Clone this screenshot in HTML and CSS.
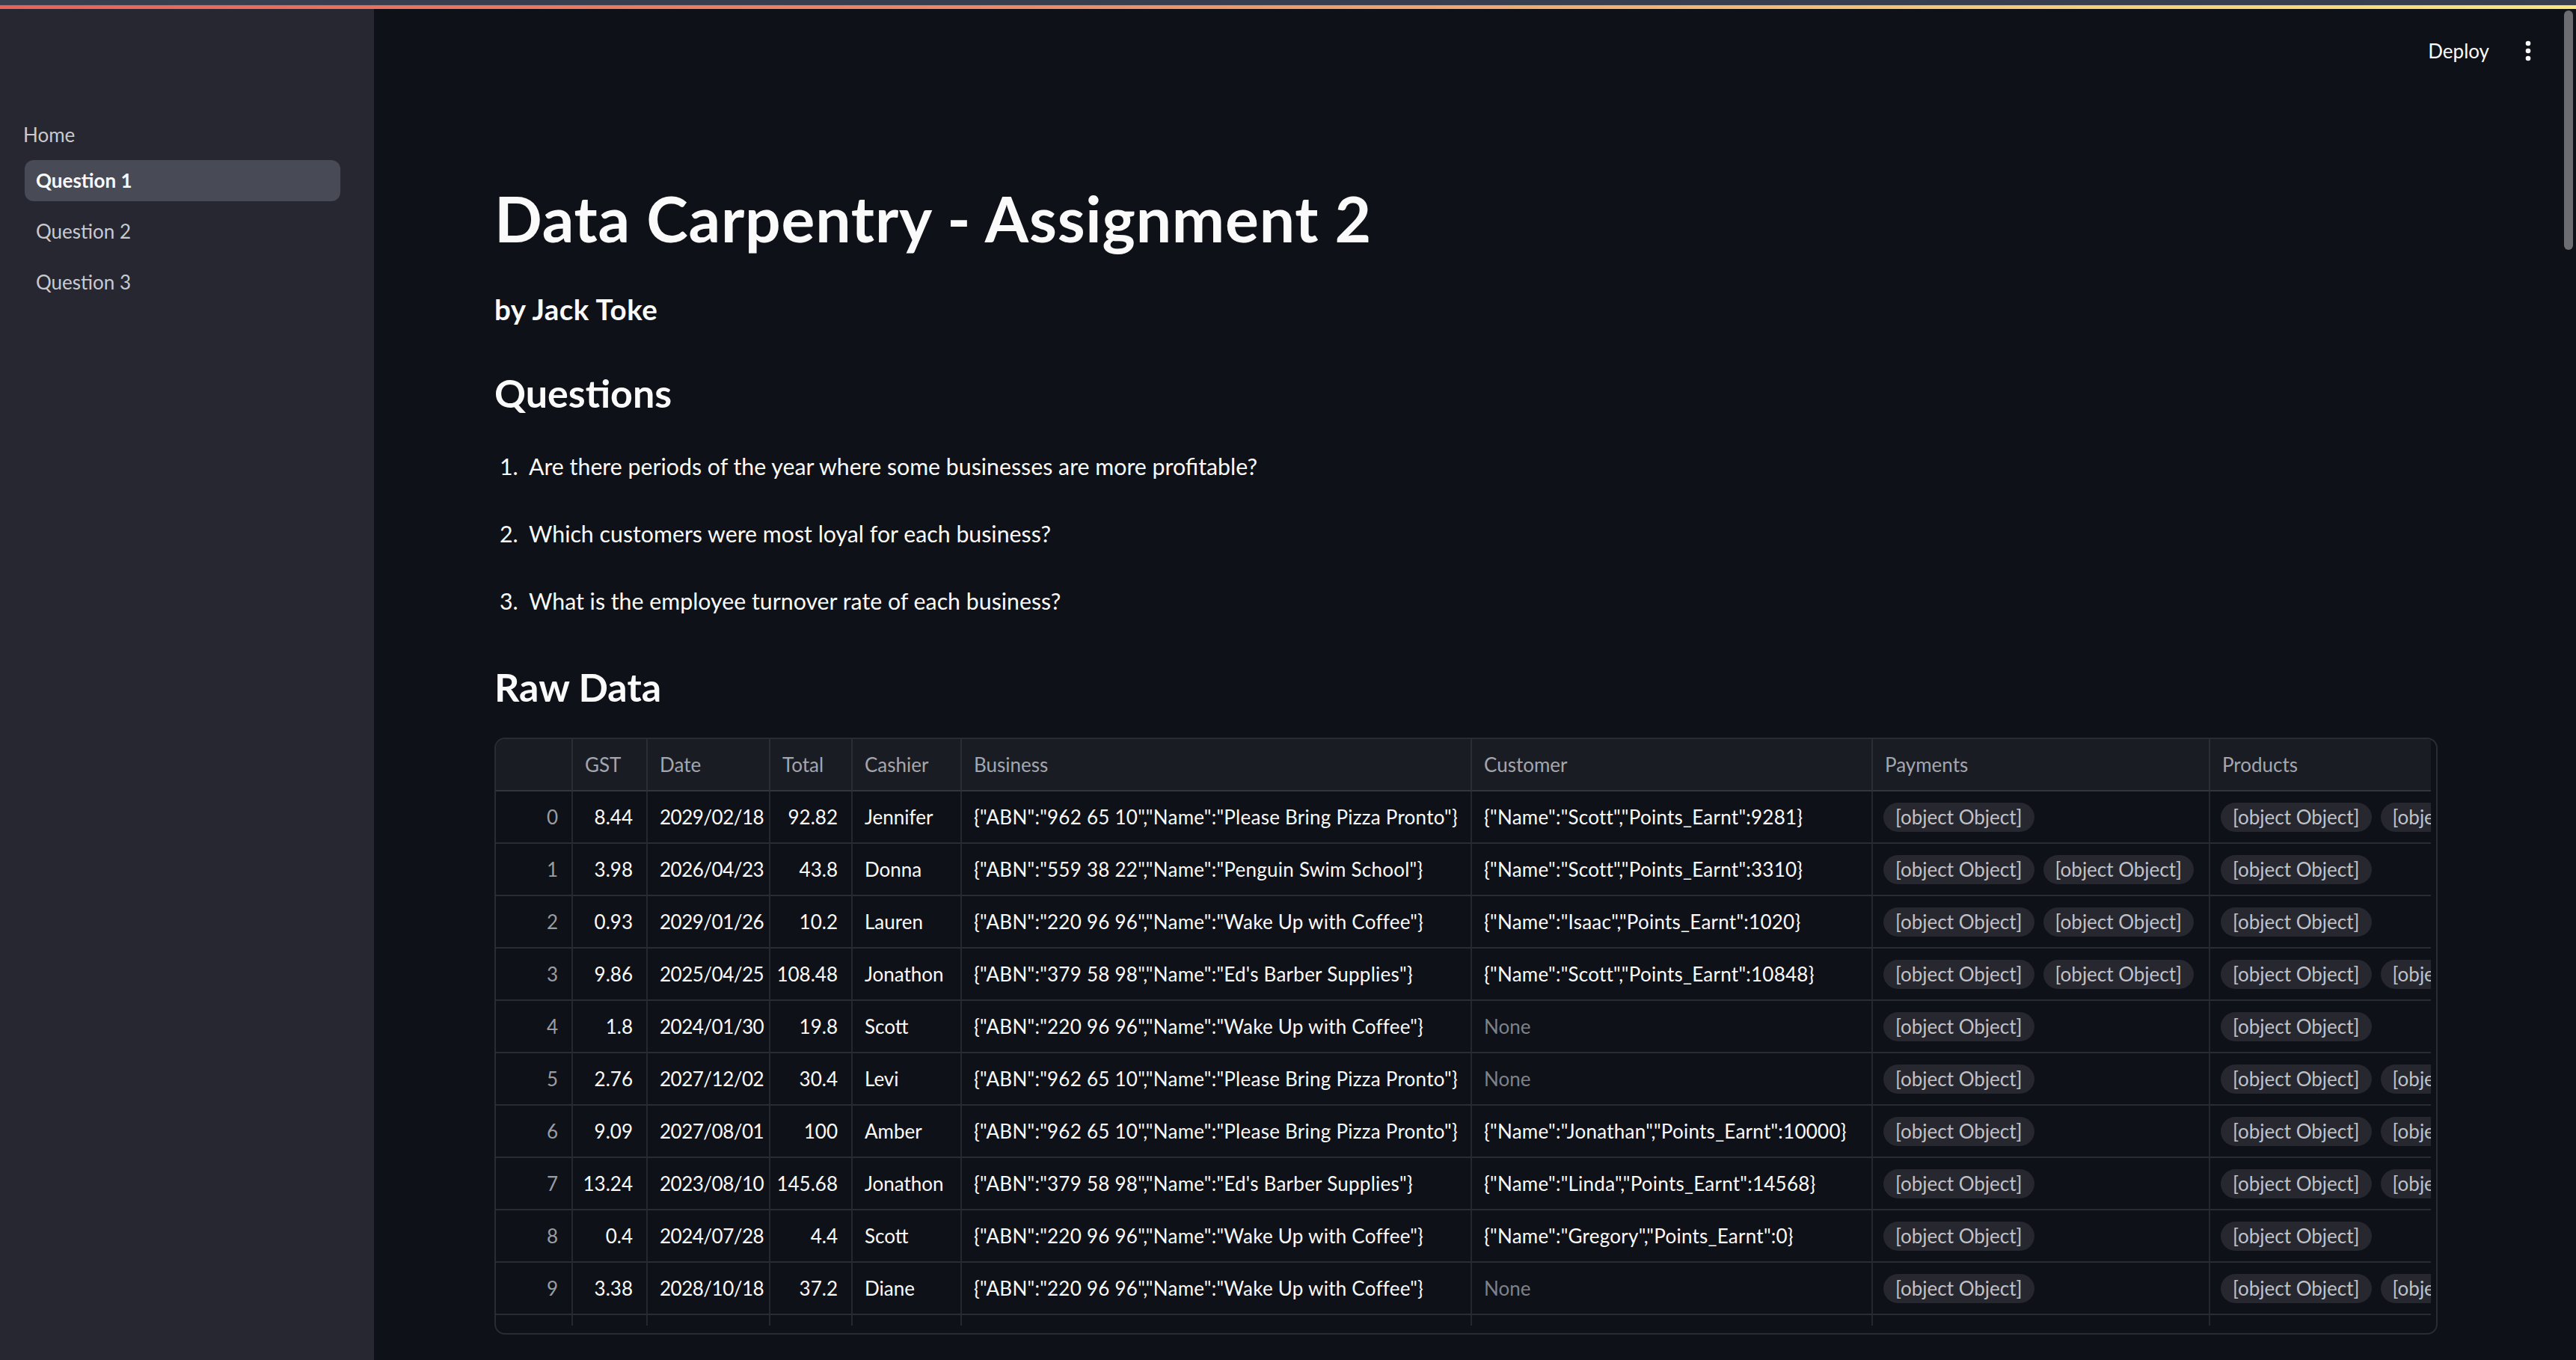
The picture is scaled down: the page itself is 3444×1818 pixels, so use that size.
FILE: index.html
```html
<!DOCTYPE html>
<html lang="en">
<head>
<meta charset="utf-8">
<title>Data Carpentry - Assignment 2</title>
<link rel="stylesheet" href="styles.css">
</head>
<body>
<div class="app">
  <div class="chrome"></div>
  <div class="deco"></div>
  <div class="layout">
    <aside class="sidebar">
      <nav class="nav">
        <div class="nav-home">Home</div>
        <a class="nav-item active">Question 1</a>
        <a class="nav-item">Question 2</a>
        <a class="nav-item">Question 3</a>
      </nav>
    </aside>
    <main class="main">
      <header class="topbar">
        <span class="deploy">Deploy</span>
        <svg class="kebab" width="24" height="40" viewBox="0 0 24 40"><circle cx="12" cy="10" r="3.3"/><circle cx="12" cy="20" r="3.3"/><circle cx="12" cy="30" r="3.3"/></svg>
      </header>
      <section class="content">
        <h1 class="title">Data Carpentry - Assignment 2</h1>
        <h4 class="byline">by Jack Toke</h4>
        <h3 class="section-title">Questions</h3>
        <ol class="questions">
          <li><span class="num">1.</span><span>Are there periods of the year where some businesses are more profitable?</span></li>
          <li><span class="num">2.</span><span>Which customers were most loyal for each business?</span></li>
          <li><span class="num">3.</span><span>What is the employee turnover rate of each business?</span></li>
        </ol>
        <h3 class="section-title raw">Raw Data</h3>
        <div class="table">
          <div class="grid">
            <div class="th"></div><div class="th">GST</div><div class="th">Date</div><div class="th">Total</div><div class="th">Cashier</div><div class="th">Business</div><div class="th">Customer</div><div class="th">Payments</div><div class="th">Products</div>

            <div class="td idx">0</div><div class="td num">8.44</div><div class="td date">2029/02/18</div><div class="td num">92.82</div><div class="td">Jennifer</div><div class="td obj">{"ABN":"962 65 10","Name":"Please Bring Pizza Pronto"}</div><div class="td obj">{"Name":"Scott","Points_Earnt":9281}</div><div class="td pills"><span class="pill">[object Object]</span></div><div class="td pills"><span class="pill">[object Object]</span><span class="pill">[object Object]</span></div>

            <div class="td idx">1</div><div class="td num">3.98</div><div class="td date">2026/04/23</div><div class="td num">43.8</div><div class="td">Donna</div><div class="td obj">{"ABN":"559 38 22","Name":"Penguin Swim School"}</div><div class="td obj">{"Name":"Scott","Points_Earnt":3310}</div><div class="td pills"><span class="pill">[object Object]</span><span class="pill">[object Object]</span></div><div class="td pills"><span class="pill">[object Object]</span></div>

            <div class="td idx">2</div><div class="td num">0.93</div><div class="td date">2029/01/26</div><div class="td num">10.2</div><div class="td">Lauren</div><div class="td obj">{"ABN":"220 96 96","Name":"Wake Up with Coffee"}</div><div class="td obj">{"Name":"Isaac","Points_Earnt":1020}</div><div class="td pills"><span class="pill">[object Object]</span><span class="pill">[object Object]</span></div><div class="td pills"><span class="pill">[object Object]</span></div>

            <div class="td idx">3</div><div class="td num">9.86</div><div class="td date">2025/04/25</div><div class="td num">108.48</div><div class="td">Jonathon</div><div class="td obj">{"ABN":"379 58 98","Name":"Ed's Barber Supplies"}</div><div class="td obj">{"Name":"Scott","Points_Earnt":10848}</div><div class="td pills"><span class="pill">[object Object]</span><span class="pill">[object Object]</span></div><div class="td pills"><span class="pill">[object Object]</span><span class="pill">[object Object]</span></div>

            <div class="td idx">4</div><div class="td num">1.8</div><div class="td date">2024/01/30</div><div class="td num">19.8</div><div class="td">Scott</div><div class="td obj">{"ABN":"220 96 96","Name":"Wake Up with Coffee"}</div><div class="td none">None</div><div class="td pills"><span class="pill">[object Object]</span></div><div class="td pills"><span class="pill">[object Object]</span></div>

            <div class="td idx">5</div><div class="td num">2.76</div><div class="td date">2027/12/02</div><div class="td num">30.4</div><div class="td">Levi</div><div class="td obj">{"ABN":"962 65 10","Name":"Please Bring Pizza Pronto"}</div><div class="td none">None</div><div class="td pills"><span class="pill">[object Object]</span></div><div class="td pills"><span class="pill">[object Object]</span><span class="pill">[object Object]</span></div>

            <div class="td idx">6</div><div class="td num">9.09</div><div class="td date">2027/08/01</div><div class="td num">100</div><div class="td">Amber</div><div class="td obj">{"ABN":"962 65 10","Name":"Please Bring Pizza Pronto"}</div><div class="td obj">{"Name":"Jonathan","Points_Earnt":10000}</div><div class="td pills"><span class="pill">[object Object]</span></div><div class="td pills"><span class="pill">[object Object]</span><span class="pill">[object Object]</span></div>

            <div class="td idx">7</div><div class="td num">13.24</div><div class="td date">2023/08/10</div><div class="td num">145.68</div><div class="td">Jonathon</div><div class="td obj">{"ABN":"379 58 98","Name":"Ed's Barber Supplies"}</div><div class="td obj">{"Name":"Linda","Points_Earnt":14568}</div><div class="td pills"><span class="pill">[object Object]</span></div><div class="td pills"><span class="pill">[object Object]</span><span class="pill">[object Object]</span></div>

            <div class="td idx">8</div><div class="td num">0.4</div><div class="td date">2024/07/28</div><div class="td num">4.4</div><div class="td">Scott</div><div class="td obj">{"ABN":"220 96 96","Name":"Wake Up with Coffee"}</div><div class="td obj">{"Name":"Gregory","Points_Earnt":0}</div><div class="td pills"><span class="pill">[object Object]</span></div><div class="td pills"><span class="pill">[object Object]</span></div>

            <div class="td idx">9</div><div class="td num">3.38</div><div class="td date">2028/10/18</div><div class="td num">37.2</div><div class="td">Diane</div><div class="td obj">{"ABN":"220 96 96","Name":"Wake Up with Coffee"}</div><div class="td none">None</div><div class="td pills"><span class="pill">[object Object]</span></div><div class="td pills"><span class="pill">[object Object]</span><span class="pill">[object Object]</span></div>

            <div class="td idx">10</div><div class="td num">2.1</div><div class="td date">2025/09/14</div><div class="td num">23.1</div><div class="td">Amber</div><div class="td obj">{"ABN":"559 38 22","Name":"Penguin Swim School"}</div><div class="td none">None</div><div class="td pills"><span class="pill">[object Object]</span></div><div class="td pills"><span class="pill">[object Object]</span><span class="pill">[object Object]</span></div>
          </div>
        </div>
      </section>
      <div class="scroll-thumb"></div>
    </main>
  </div>
</div>
</body>
</html>
```
FILE: styles.css
```css
* { box-sizing: border-box; }
html, body { margin: 0; padding: 0; }
body {
  background: #0e1117;
  color: #fafafa;
  font-family: Lato, "Noto Sans", sans-serif;
}
.app {
  width: 3444px;
  height: 1818px;
  overflow: hidden;
  display: flex;
  flex-direction: column;
}
.chrome {
  height: 7px;
  background: #373e4f;
  border-bottom: 1px solid #41444e;
}
.deco {
  height: 5px;
  background: linear-gradient(90deg, #e8625a 0%, #ec8a68 40%, #f3c678 75%, #f7e67f 100%);
}
.layout {
  flex: 1;
  display: flex;
  min-height: 0;
}
.sidebar {
  width: 500px;
  flex: none;
  background: #262730;
}
.nav {
  padding: 148px 45px 0 31px;
  display: flex;
  flex-direction: column;
  gap: 13px;
}
.nav-home {
  height: 40px;
  line-height: 40px;
  font-size: 26px;
  color: #c9cad0;
  margin-bottom: 1px;
}
.nav-item {
  display: block;
  margin-left: 2px;
  height: 55px;
  line-height: 55px;
  padding-left: 15px;
  border-radius: 12px;
  font-size: 26px;
  color: #c9cad0;
}
.nav-item.active {
  background: #484a55;
  color: #fafafa;
  font-weight: 700;
}
.main {
  position: relative;
  flex: 1;
  min-width: 0;
  background: #0e1117;
}
.topbar {
  height: 112px;
  display: flex;
  align-items: center;
  justify-content: flex-end;
  gap: 40px;
  padding-right: 52px;
}
.deploy {
  font-size: 26px;
  line-height: 40px;
  color: #fafafa;
}
.kebab { fill: #fafafa; display: block; }
.scroll-thumb {
  position: absolute;
  top: 2px;
  right: 4px;
  width: 12px;
  height: 320px;
  border-radius: 6px;
  background: #6c6d72;
}
.content {
  padding: 0 185px 0 161px;
}
.title {
  margin: 118px 0 0;
  font-size: 84px;
  line-height: 100px;
  font-weight: 700;
  letter-spacing: 0.8px;
}
.byline {
  margin: 46px 0 0;
  font-size: 38.5px;
  line-height: 50px;
  font-weight: 700;
  letter-spacing: 0.5px;
}
.section-title {
  margin: 52px 0 0;
  font-size: 52px;
  line-height: 70px;
  font-weight: 700;
}
.questions {
  list-style: none;
  margin: 38px 0 0;
  padding: 0;
  display: flex;
  flex-direction: column;
  gap: 40px;
}
.questions li {
  display: flex;
  font-size: 30.3px;
  line-height: 50px;
}
.questions .num {
  width: 46px;
  flex: none;
  padding-left: 7px;
}
.section-title.raw { margin-top: 55px; }
.table {
  margin-top: 33px;
  height: 798px;
  border: 2px solid #2a2c35;
  border-radius: 14px;
  overflow: hidden;
  padding: 0 7px 10px 0;
}
.grid {
  height: 784px;
  overflow: hidden;
  display: grid;
  grid-template-columns: 103px 100px 164px 110px 146px 682px 536px 451px 600px;
  grid-auto-rows: 70px;
  font-size: 26px;
}
.th, .td {
  display: flex;
  align-items: center;
  padding: 0 16px;
  white-space: nowrap;
  border-right: 2px solid #25272f;
  border-bottom: 2px solid #2a2c34;
  overflow: hidden;
}
.th {
  background: #1a1c24;
  color: #a3a6ae;
  border-right-color: #2b2d36;
  border-bottom-color: #33353e;
}
.td { color: #fafafa; }
.td.idx { justify-content: flex-end; color: #9a9ca4; padding-right: 18px; }
.td.num { justify-content: flex-end; padding-right: 18px; }
.td.date { letter-spacing: -0.5px; }
.td.obj { letter-spacing: 0.25px; }
.td.none { color: #7f8189; }
.td.pills { padding-left: 14px; gap: 12px; }
.pill {
  flex: none;
  height: 39px;
  line-height: 39px;
  padding: 0 16px;
  border-radius: 20px;
  background: #26272f;
  color: #c0c2c8;
}
```
